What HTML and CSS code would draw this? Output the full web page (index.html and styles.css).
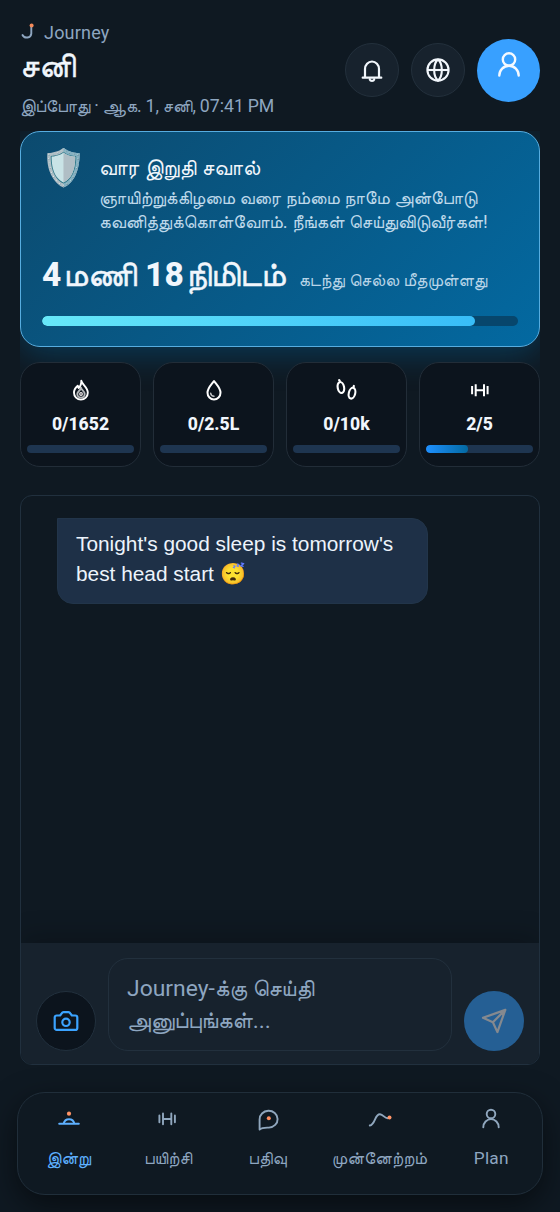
FILE: index.html
```html
<!DOCTYPE html>
<html lang="ta">
<head>
<meta charset="utf-8">
<title>Journey</title>
<link rel="stylesheet" href="styles.css">
</head>
<body>
<div class="app">
  <header class="header">
    <div class="heading">
      <div class="brand">
        <svg class="brand-mark" width="16" height="18" viewBox="0 0 16 18" fill="none"><path d="M11.300 4.500v6.100a4.600 4.200 0 0 1-8.800 1.400" stroke="#8ea6c0" stroke-width="1.900" stroke-linecap="round"/><circle cx="11.600" cy="2.600" r="2" fill="#f58a5a"/></svg>
        <span>Journey</span>
      </div>
      <h1 class="title">சனி</h1>
      <p class="date">இப்போது · ஆக. 1, சனி, 07:41 PM</p>
    </div>
    <div class="actions">
      <button class="round"><svg width="28" height="28" viewBox="0 0 28 28" fill="none" stroke="#f2f7fc" stroke-width="2.200" stroke-linejoin="round" stroke-linecap="round"><path d="M4.700 21.700h18.600M7 21.300V13a7 7.500 0 0 1 14 0v8.300M11.800 23.700a2.300 1.700 0 0 0 4.400 0"/></svg></button>
      <button class="round"><svg width="28" height="28" viewBox="0 0 28 28" fill="none" stroke="#f2f7fc" stroke-width="2.100"><circle cx="14" cy="14" r="10.600"/><path d="M3.400 14h21.200"/><path d="M14 3.400C8.900 8 8.900 20 14 24.600C19.100 20 19.100 8 14 3.400"/></svg></button>
      <button class="avatar"><svg width="28" height="28" viewBox="0 0 28 28" fill="none" stroke="#f4f9ff" stroke-width="2.400" stroke-linecap="round"><circle cx="14" cy="8.500" r="6.200"/><path d="M4.300 24.500a9.700 9.800 0 0 1 19.400 0"/></svg></button>
    </div>
  </header>

  <main class="main">
    <section class="challenge">
      <div class="challenge-top">
        <div class="shield">🛡️</div>
        <div>
          <h2 class="challenge-title">வார இறுதி சவால்</h2>
          <p class="challenge-text">ஞாயிற்றுக்கிழமை வரை நம்மை நாமே அன்போடு<br>கவனித்துக்கொள்வோம். நீங்கள் செய்துவிடுவீர்கள்!</p>
        </div>
      </div>
      <div class="countdown"><strong>4<i>மணி</i> 18<i>நிமிடம்</i></strong><span>கடந்து செல்ல மீதமுள்ளது</span></div>
      <div class="bar bar-lg"><div class="fill fill-lg" style="width:91%"></div></div>
    </section>

    <section class="stats">
      <div class="stat">
        <svg class="stat-icon" width="24" height="24" viewBox="0 0 24 24" fill="none" stroke="#fff" stroke-width="1.900" stroke-linecap="round" stroke-linejoin="round"><path d="M12.300 2.700C12.600 6.200 18.800 9 18.800 14.700a6.900 6.900 0 0 1-13.800 0c0-3 1.500-5.200 3.700-7l.9 2.300c1.900-1.600 2.800-4.200 2.700-7.300z"/><path d="M12 9.700c.3 2.300 3.700 3.300 3.700 6.200a3.700 3.700 0 0 1-7.400 0c0-2.300 2.900-3 3.700-6.200z" opacity=".7"/><circle cx="12" cy="16" r="1.300" stroke="#f6eff0" stroke-width="1.200"/></svg>
        <b>0/1652</b><div class="bar"></div>
      </div>
      <div class="stat">
        <svg class="stat-icon" width="24" height="24" viewBox="0 0 24 24" fill="none" stroke="#fff" stroke-width="2" stroke-linecap="round" stroke-linejoin="round"><path d="M12 3c2.700 3.800 6.500 7 6.500 11.700a6.500 6.700 0 0 1-13 0C5.500 10 9.300 6.800 12 3z"/><path d="M8.700 15.300a3.400 3.400 0 0 0 3.300 2.900" stroke-width="1.500" opacity=".75"/></svg>
        <b>0/2.5L</b><div class="bar"></div>
      </div>
      <div class="stat">
        <svg class="stat-icon" width="24" height="24" viewBox="0 0 24 24" fill="none" stroke="#fff" stroke-width="2.100" stroke-linecap="round"><ellipse cx="5.900" cy="9.500" rx="3.200" ry="5.500" transform="rotate(-12 5.900 9.500)"/><path d="M4.100 2l.7.900M18.900 7.900l-.4 1.200"/><ellipse cx="17" cy="15.200" rx="3.200" ry="5.500" transform="rotate(14 17 15.200)"/></svg>
        <b>0/10k</b><div class="bar"></div>
      </div>
      <div class="stat">
        <svg class="stat-icon" width="24" height="24" viewBox="0 0 24 24" fill="none" stroke="#fff" stroke-width="2"><path d="M4.100 8v8.300M7.700 6.200v12.100M16 6.200v12.100M19.600 8v8.300M7.700 12.300H16"/></svg>
        <b>2/5</b><div class="bar"><div class="fill" style="width:39.500%"></div></div>
      </div>
    </section>

    <section class="chat">
      <div class="messages">
        <div class="bubble">Tonight's good sleep is tomorrow's best head start 😴</div>
      </div>
      <div class="composer">
        <button class="camera"><svg width="28" height="28" viewBox="0 0 28 28" fill="none" stroke="#3ba3ff" stroke-width="2.200" stroke-linejoin="round"><path d="M4.700 8.500h3.400L9.700 6.400Q10.400 5.200 11.500 5.200h5Q17.600 5.200 18.300 6.400L19.900 8.500h3.400a2 2 0 0 1 2 2v10.400a2 2 0 0 1-2 2H4.700a2 2 0 0 1-2-2V10.500a2 2 0 0 1 2-2z"/><circle cx="14" cy="15.300" r="3.700"/></svg></button>
        <div class="field">Journey-க்கு செய்தி<br>அனுப்புங்கள்...</div>
        <button class="send"><svg width="28" height="28" viewBox="0 0 28 28" fill="none" stroke="#85898f" stroke-width="2.200" stroke-linejoin="round" stroke-linecap="round"><path d="M25.300 2.900L3 10.800l9.900 4.400 4.500 9.900zM25.300 2.900L12.900 15.200"/></svg></button>
      </div>
    </section>
  </main>

  <nav class="nav">
    <a class="tab active"><svg width="24" height="24" viewBox="0 0 24 24" fill="none" stroke="#5eb0ff" stroke-width="2" stroke-linecap="round"><path d="M2.200 16.800h19.600M6.700 16.500a5.400 5.400 0 0 1 10.600 0"/><circle cx="12" cy="6.700" r="2.100" fill="#ff9365" stroke="none"/></svg><span>இன்று</span></a>
    <a class="tab"><svg width="24" height="24" viewBox="0 0 24 24" fill="none" stroke="#90a7be" stroke-width="1.900" stroke-linecap="round"><path d="M3.400 8.400v6.900M7 6.500v10.800M15.300 6.500v10.800M18.900 8.400v6.900M7 12h8.300"/></svg><span>பயிற்சி</span></a>
    <a class="tab"><svg width="24" height="24" viewBox="0 0 24 24" fill="none" stroke="#90a7be" stroke-width="1.900" stroke-linejoin="round"><path d="M3.600 22.500V12.500a9 8.400 0 1 1 9.300 8.100C9 20.600 6 20.300 3.600 22.500z"/><circle cx="12.800" cy="11.200" r="2" fill="#ff8e60" stroke="none"/></svg><span>பதிவு</span></a>
    <a class="tab wide"><svg width="24" height="24" viewBox="0 0 24 24" fill="none" stroke="#90a7be" stroke-width="1.900" stroke-linecap="round"><path d="M1.800 18.500C7.500 17.500 6.500 7 12 7.200c3.700.2 5 5.500 9 3.800"/><circle cx="21.500" cy="10.500" r="2" fill="#ff9468" stroke="none"/></svg><span>முன்னேற்றம்</span></a>
    <a class="tab"><svg width="24" height="24" viewBox="0 0 24 24" fill="none" stroke="#90a7be" stroke-width="1.900" stroke-linecap="round"><circle cx="12" cy="7" r="4.300"/><path d="M4.300 20.300a7.700 8.200 0 0 1 15.400 0"/></svg><span>Plan</span></a>
  </nav>
</div>
</body>
</html>
```
FILE: styles.css
```css
* { box-sizing: border-box; }
body { margin: 0; background: #0f1922; color: #f1f6fc; font-family: Roboto, FreeSans, sans-serif; }
h1, h2, p { margin: 0; font-weight: 400; }
button { padding: 0; border: 0; font: inherit; display: flex; align-items: center; justify-content: center; flex: none; }
svg { display: block; flex: none; }
.app { width: 560px; height: 1212px; display: flex; flex-direction: column; overflow: hidden; }
.header { height: 131px; padding: 20px 20px 0; display: flex; justify-content: space-between; }
.brand { display: flex; align-items: center; gap: 8px; height: 24px; font-size: 18px; letter-spacing: .2px; color: #8ea6c0; }
.title { height: 46px; line-height: 44px; font-size: 33px; white-space: nowrap; -webkit-text-stroke: .4px #f1f6fc; }
.date { height: 32px; line-height: 32px; font-size: 17.7px; word-spacing: -.6px; color: #8ea6c0; white-space: nowrap; }
.actions { display: flex; align-items: center; gap: 12px; height: 64px; margin-top: 18px; }
.round { width: 54px; height: 54px; border-radius: 50%; background: #17222d; border: 1px solid #23303c; }
.avatar { width: 63px; height: 63px; border-radius: 50%; background: #38a0ff; padding-bottom: 11px; }
.main { margin: 0 20px; height: 934px; overflow: hidden; flex: none; display: flex; flex-direction: column; }
.challenge { height: 216px; flex: none; padding: 16px 21px 0; border: 1px solid #57ade0; border-radius: 20px; background: linear-gradient(135deg, #0c4a6e, #0369a1); box-shadow: 0 8px 32px rgba(3,105,161,.4); }
.challenge-top { display: flex; gap: 15px; height: 88px; }
.shield { width: 42px; flex: none; font-size: 36px; line-height: 40px; white-space: nowrap; margin-left: -1px; margin-right: 1px; }
.challenge-title { height: 38px; line-height: 40px; font-size: 21.5px; white-space: nowrap; }
.challenge-text { line-height: 24px; font-size: 18.4px; color: #bdd8ea; white-space: nowrap; }
.countdown { display: flex; align-items: baseline; gap: 13px; height: 80px; line-height: 78px; white-space: nowrap; }
.countdown strong { font-size: 33.5px; font-weight: 800; }
.countdown i { font-style: normal; font-weight: 400; margin-left: 2.5px; -webkit-text-stroke: .5px #f1f6fc; }
.countdown span { font-size: 17.5px; color: #b8d4e7; }
.bar { width: 100%; height: 8px; border-radius: 5px; background: #1e3550; overflow: hidden; }
.bar-lg { height: 10px; background: #07466c; }
.fill { height: 100%; border-radius: 5px; background: linear-gradient(90deg, #1e90ff, #0369a1); }
.fill-lg { background: linear-gradient(90deg, #67e8f9, #38bdf8); }
.stats { margin-top: 15px; height: 105px; flex: none; display: grid; grid-template-columns: repeat(4, 1fr); gap: 12px; }
.stat { display: flex; flex-direction: column; align-items: center; padding: 15px 6px 0; border: 1px solid #222d38; border-radius: 20px; background: #0c141d; }
.stat b { height: 43px; line-height: 45px; font-size: 17.6px; font-weight: 800; }
.chat { margin-top: 28px; height: 570px; flex: none; display: flex; flex-direction: column; border: 1px solid #21303e; border-radius: 12px; background: #0f1922; overflow: hidden; }
.messages { flex: 1; padding: 22px 36px; }
.bubble { width: 371px; height: 86px; padding: 10px 18px; border-radius: 0 16px 16px 16px; background: #1e3047; border: 1px solid #22354a; color: #edf4fc; font: 20.85px/30px "Liberation Sans", Arial, sans-serif; }
.composer { height: 121px; flex: none; display: flex; align-items: flex-end; gap: 12px; padding: 14px 15px 13px; background: #17222d; box-shadow: 0 -8px 24px rgba(0,0,0,.2); }
.camera, .send { width: 60px; height: 60px; border-radius: 50%; }
.camera { background: #0c141d; border: 1px solid #22303d; }
.send { background: #255f94; }
.field { flex: 1; height: 93px; padding: 14px 18px; border: 1px solid #22303d; border-radius: 20px; color: #8ea6c0; font-size: 22.9px; line-height: 32px; white-space: nowrap; }
.nav { margin: 27px 17px 0; height: 103px; flex: none; padding: 0 1px; display: flex; border: 1px solid #202e3a; border-radius: 28px; background: #0f1922; box-shadow: 0 10px 30px rgba(0,0,0,.5); }
.tab { flex: 0 0 99.5px; padding-top: 14px; display: flex; flex-direction: column; align-items: center; color: #8ea6c0; font-size: 17.3px; letter-spacing: .2px; white-space: nowrap; }
.tab.wide { flex: 1; }
.tab span { height: 30px; line-height: 30px; margin-top: 12px; }
.active { color: #5eb0ff; }
```
